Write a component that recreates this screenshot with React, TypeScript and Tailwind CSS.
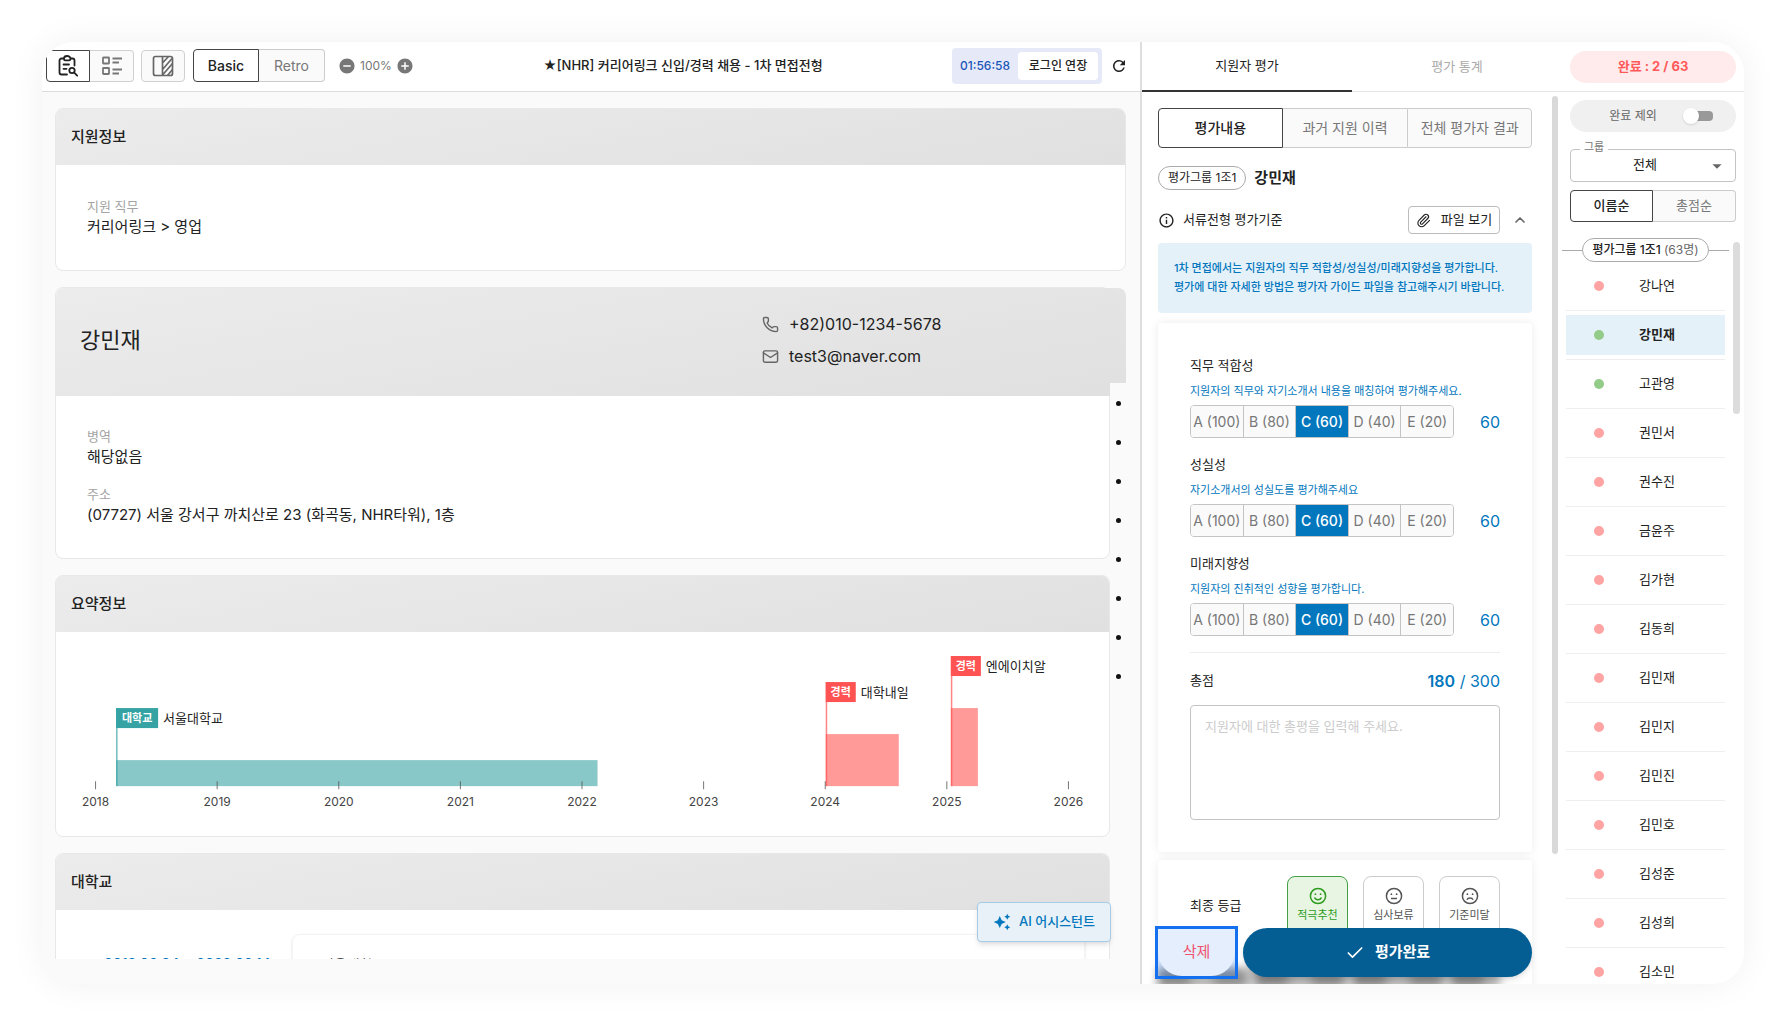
import { ReactNode } from 'react';
import { Mail, Paperclip, Phone, ChevronUp, Check } from 'lucide-react';
import { MdAddCircle, MdArrowDropDown, MdAutoAwesome, MdInfoOutline, MdRefresh, MdRemoveCircle } from 'react-icons/md';

const criteria = [
  { title: '직무 적합성', desc: '지원자의 직무와 자기소개서 내용을 매칭하여 평가해주세요.', score: 60 },
  { title: '성실성', desc: '자기소개서의 성실도를 평가해주세요', score: 60 },
  { title: '미래지향성', desc: '지원자의 진취적인 성향을 평가합니다.', score: 60 },
];

const levels = [
  { label: 'A (100)', value: 100 },
  { label: 'B (80)', value: 80 },
  { label: 'C (60)', value: 60 },
  { label: 'D (40)', value: 40 },
  { label: 'E (20)', value: 20 },
];

const applicants = [
  { name: '강나연', done: false },
  { name: '강민재', done: true },
  { name: '고관영', done: true },
  { name: '권민서', done: false },
  { name: '권수진', done: false },
  { name: '금윤주', done: false },
  { name: '김가현', done: false },
  { name: '김동희', done: false },
  { name: '김민재', done: false },
  { name: '김민지', done: false },
  { name: '김민진', done: false },
  { name: '김민호', done: false },
  { name: '김성준', done: false },
  { name: '김성희', done: false },
  { name: '김소민', done: false },
];

const years = [2018, 2019, 2020, 2021, 2022, 2023, 2024, 2025, 2026];

const careers = [
  { tag: '대학교', name: '서울대학교', x: 60, width: 481, height: 26, tagWidth: 42, color: '#35a3a3', fill: '#89c8c8' },
  { tag: '경력', name: '대학내일', x: 769, width: 73, height: 52, tagWidth: 30, color: '#ff5252', fill: '#ff9a98' },
  { tag: '경력', name: '엔에이치알', x: 894, width: 27, height: 78, tagWidth: 30, color: '#ff5252', fill: '#ff9a98' },
];

function ClipboardSearchIcon() {
  return (
    <svg width="22" height="22" viewBox="0 0 22 22" fill="none" stroke="currentColor" strokeWidth="1.8" strokeLinecap="round" strokeLinejoin="round">
      <path d="M6.500 3.500H4.500a2 2 0 0 0-2 2v12a2 2 0 0 0 2 2h5.500" />
      <path d="M14 3.500h1.500a2 2 0 0 1 2 2V10.500" />
      <path d="M7 3.500a3.200 2.500 0 0 1 6.400 0v0.500a1.300 1.300 0 0 1-1.300 1.300H8.300a1.300 1.300 0 0 1-1.300-1.300z" />
      <path d="M6.500 9.500h5.500M6.500 13.800h3" />
      <circle cx="15" cy="15.500" r="2.700" />
      <path d="M17.200 17.700l3 3" />
    </svg>
  );
}

function ListIcon() {
  return (
    <svg width="22" height="22" viewBox="0 0 22 22" fill="none" stroke="currentColor" strokeWidth="1.8">
      <rect x="2" y="2.500" width="6" height="6" rx="0.5" />
      <rect x="2" y="13" width="6" height="6" rx="0.5" />
      <path d="M11.500 3.500H21M11.500 7.500H18M11.500 14.500H21M11.500 18.500H18" />
    </svg>
  );
}

function SplitIcon() {
  return (
    <svg width="22" height="22" viewBox="0 0 22 22" fill="none" stroke="currentColor" strokeWidth="1.7">
      <rect x="1.500" y="1.500" width="19" height="19" rx="2" />
      <path d="M10.500 1.500v19M10.500 8l6-6.500M10.500 14.500l9.500-11M10.500 20l10-11.500M15.500 20.500l5-6" />
    </svg>
  );
}

function FaceIcon({ mouth }: { mouth: string }) {
  return (
    <svg width="18" height="18" viewBox="0 0 18 18" fill="none" stroke="currentColor" strokeWidth="1.5">
      <circle cx="9" cy="9" r="7.6" />
      <circle cx="6.4" cy="7.2" r="0.9" fill="currentColor" stroke="none" />
      <circle cx="11.6" cy="7.2" r="0.9" fill="currentColor" stroke="none" />
      <path d={mouth} />
    </svg>
  );
}

function CardHeader({ title }: { title: string }) {
  return (
    <div className="h-14 flex items-center px-[15px] bg-linear-170 from-[#ececec] to-[#e0e0e0]">
      <h2 className="text-[15px] font-medium">{title}</h2>
    </div>
  );
}

function Card({ children, className = '' }: { children: ReactNode; className?: string }) {
  return (
    <section className={`shrink-0 rounded-lg border border-[#e8e8e8] bg-white ${className}`}>{children}</section>
  );
}

function Field({ label, value }: { label: string; value: string }) {
  return (
    <div>
      <dt className="text-[13px] leading-5 text-[#a3a3a3]">{label}</dt>
      <dd className="text-[15px] leading-[22px]">{value}</dd>
    </div>
  );
}

function CareerChart() {
  const base = 154;
  return (
    <svg className="block w-full" viewBox="0 0 1052 204">
      {careers.map((c) => {
        const top = base - c.height - 52;
        return (
          <g key={c.name}>
            <rect x={c.x} y={base - c.height} width={c.width} height={c.height} fill={c.fill} />
            <rect x={c.x} y={top} width="1.5" height={base - top} fill={c.color} opacity="0.7" />
            <rect x={c.x} y={top} width={c.tagWidth} height="20" fill={c.color} />
            <text x={c.x + c.tagWidth / 2} y={top + 14} textAnchor="middle" fontSize="11" fontWeight="700" fill="#fff">{c.tag}</text>
            <text x={c.x + c.tagWidth + 5} y={top + 15} fontSize="13" fill="#222">{c.name}</text>
          </g>
        );
      })}
      {years.map((year, i) => {
        const x = 39.5 + i * 121.5;
        return (
          <g key={year}>
            <path d={`M${x} 149v8`} stroke="#555" opacity="0.8" />
            <text x={x} y="174" textAnchor="middle" fontSize="12" fill="#444">{year}</text>
          </g>
        );
      })}
    </svg>
  );
}

function Toolbar() {
  return (
    <header className="h-[50px] shrink-0 flex items-center bg-white border-b border-[#dcdcdc] pl-1 pr-3 pb-0.5">
      <div className="flex text-[#777]">
        <button aria-label="지원서 보기" className="w-11 h-8 flex items-center justify-center rounded-l border border-[#444] bg-white text-[#222]">
          <ClipboardSearchIcon />
        </button>
        <button aria-label="목록 보기" className="w-11 h-8 flex items-center justify-center rounded-r border border-l-0 border-[#d0d0d0] bg-[#fafafa]">
          <ListIcon />
        </button>
      </div>
      <button aria-label="분할 보기" className="ml-[7px] w-11 h-8 flex items-center justify-center rounded border border-[#d0d0d0] bg-[#fafafa] text-[#666]">
        <SplitIcon />
      </button>
      <div className="ml-2 flex text-sm">
        <button className="w-[66px] h-[33px] rounded-l border border-[#444] bg-white font-medium">Basic</button>
        <button className="w-[66px] h-[33px] rounded-r border border-l-0 border-[#ccc] bg-[#fafafa] text-[#777]">Retro</button>
      </div>
      <div className="ml-[13px] flex items-center gap-1 text-xs text-[#777]">
        <button aria-label="축소"><MdRemoveCircle size={18} /></button>
        <span>100%</span>
        <button aria-label="확대"><MdAddCircle size={18} /></button>
      </div>
      <h1 className="flex-1 text-center text-[13px] font-medium">★[NHR] 커리어링크 신입/경력 채용 - 1차 면접전형</h1>
      <div className="h-9 flex items-center rounded bg-[#e6eaf8] pl-2 pr-1 gap-2">
        <span className="text-xs font-medium text-[#1c55b8]">01:56:58</span>
        <button className="w-20 h-7 rounded bg-white text-xs font-medium">로그인 연장</button>
      </div>
      <button aria-label="새로고침" className="ml-2"><MdRefresh size={18} /></button>
    </header>
  );
}

function Resume() {
  return (
    <main className="relative flex-1 min-w-0 flex flex-col bg-[#fafafa]">
      <Toolbar />
      <div className="relative flex-1 min-h-0 overflow-hidden flex flex-col gap-4 pt-4 pl-[13px] pr-[14px] mb-[25px]">
        <Card className="overflow-hidden">
          <CardHeader title="지원정보" />
          <dl className="px-[31px] pt-[31px] pb-8">
            <Field label="지원 직무" value="커리어링크 > 영업" />
          </dl>
        </Card>

        <Card className="mr-4">
          <div className="-mr-[17px] h-[108px] flex items-center rounded-t-lg px-6 pb-1 bg-linear-170 from-[#ececec] to-[#e0e0e0]">
            <h2 className="w-[682px] text-[22px]">강민재</h2>
            <div className="flex flex-col gap-2">
              <p className="flex items-center gap-2.5"><Phone size={17} strokeWidth={2} className="text-[#666]" />+82)010-1234-5678</p>
              <p className="flex items-center gap-2.5"><Mail size={17} strokeWidth={2} className="text-[#666]" />test3@naver.com</p>
            </div>
          </div>
          <dl className="px-[31px] pt-[30px] pb-8 flex flex-col gap-4">
            <Field label="병역" value="해당없음" />
            <Field label="주소" value="(07727) 서울 강서구 까치산로 23 (화곡동, NHR타워), 1층" />
          </dl>
        </Card>

        <Card className="mr-4 overflow-hidden">
          <CardHeader title="요약정보" />
          <CareerChart />
        </Card>

        <Card className="mr-4 overflow-hidden">
          <CardHeader title="대학교" />
          <div className="flex items-start pt-6 pl-12">
            <p className="w-[188px] pt-5 text-sm font-medium text-[#0277bd]">2018.03.04 ~ 2022.02.14</p>
            <div className="flex-1 mr-6 h-32 rounded-lg border border-[#f3f3f3] shadow-sm px-7 pt-5 text-sm">서울대학교</div>
          </div>
        </Card>

        {/* section navigator, laid over the right gutter */}
        <nav className="absolute right-0 top-[291px] bottom-0 w-[30px] bg-[#fafafa] pt-[18px] pl-[6px] flex flex-col gap-[34px]">
          {Array.from({ length: 8 }, (_, i) => (
            <span key={i} className="w-[5px] h-[5px] rounded-full bg-[#111]" />
          ))}
        </nav>
      </div>
      <button className="absolute right-[29px] bottom-[42px] w-[134px] h-10 flex items-center justify-center gap-2 rounded border border-[#a5cbe6] bg-[#e8f1f8] text-[13px] font-medium text-[#0277bd] shadow-md">
        <MdAutoAwesome size={18} className="shrink-0" />
        AI 어시스턴트
      </button>
    </main>
  );
}

function Criterion({ title, desc, score }: { title: string; desc: string; score: number }) {
  return (
    <div>
      <h3 className="text-[13px] leading-5">{title}</h3>
      <p className="mt-2 text-[11px] leading-4 text-[#0277bd]">{desc}</p>
      <div className="mt-1.5 flex items-center justify-between">
        <div className="flex h-[33px] w-[264px] overflow-hidden rounded border border-[#c4c4c4] divide-x divide-[#c4c4c4] text-sm">
          {levels.map((level) => (
            <button
              key={level.label}
              className={
                level.value === score
                  ? '-my-px flex-1 bg-[#0277bd] font-medium text-white whitespace-nowrap'
                  : 'flex-1 bg-[#fafafa] text-[#777] whitespace-nowrap'
              }
            >
              {level.label}
            </button>
          ))}
        </div>
        <span className="text-base text-[#0277bd]">{score}</span>
      </div>
    </div>
  );
}

function Evaluation() {
  return (
    <section className="relative w-[422px] shrink-0 flex flex-col border-l-2 border-[#dedede] bg-white">
      <div className="h-[50px] shrink-0 grid grid-cols-2 border-b border-[#e5e5e5] text-[13px]">
        <button className="-mb-px border-b-2 border-[#333]">지원자 평가</button>
        <button className="text-[#aaa]">평가 통계</button>
      </div>

      <div className="flex-1 min-h-0 overflow-hidden pt-4 pl-4 pr-[30px]">
        <div className="grid grid-cols-3 h-10 text-sm">
          <button className="rounded-l border border-[#444] font-medium">평가내용</button>
          <button className="border-y border-[#ccc] bg-[#fafafa] text-[#777]">과거 지원 이력</button>
          <button className="rounded-r border border-[#ccc] bg-[#fafafa] text-[#777]">전체 평가자 결과</button>
        </div>

        <div className="mt-[18px] flex items-center gap-2">
          <span className="h-6 px-[9px] flex items-center rounded-full border border-[#aaa] text-xs">평가그룹 1조1</span>
          <strong className="text-[15px] leading-6">강민재</strong>
        </div>

        <div className="mt-4 h-7 flex items-center text-[13px]">
          <MdInfoOutline size={17} />
          <span className="ml-2">서류전형 평가기준</span>
          <button className="ml-auto h-7 w-[92px] flex items-center justify-center gap-2.5 rounded border border-[#bbb]">
            <Paperclip size={15} strokeWidth={1.8} />
            파일 보기
          </button>
          <button aria-label="접기" className="ml-3 mr-1 text-[#666]"><ChevronUp size={16} strokeWidth={2.5} /></button>
        </div>

        <p className="mt-[9px] rounded bg-[#e5f1f9] p-4 text-[11px] leading-[19px] font-medium text-[#0277bd]">
          1차 면접에서는 지원자의 직무 적합성/성실성/미래지향성을 평가합니다.
          <br />
          평가에 대한 자세한 방법은 평가자 가이드 파일을 참고해주시기 바랍니다.
        </p>

        <div className="mt-2.5 rounded p-8 bg-white shadow-[0_0_10px_rgba(0,0,0,0.08)]">
          <div className="flex flex-col gap-4">
            {criteria.map((c) => <Criterion key={c.title} {...c} />)}
          </div>
          <div className="mt-4 border-t border-[#eee] pt-4 flex items-center justify-between">
            <label htmlFor="comment" className="text-[13px]">총점</label>
            <span className="text-base leading-6 text-[#0277bd]"><b className="font-semibold">180</b> / 300</span>
          </div>
          <textarea
            id="comment"
            placeholder="지원자에 대한 총평을 입력해 주세요."
            className="mt-3 block w-full h-[115px] resize-none rounded border border-[#c4c4c4] px-3.5 py-2.5 text-[13px] leading-5 placeholder:text-[#ccc]"
          />
        </div>

        <div className="mt-2 h-40 rounded px-8 pt-4 flex justify-between bg-white shadow-[0_0_10px_rgba(0,0,0,0.08)]">
          <h3 className="pt-[19px] text-[13px] leading-5">최종 등급</h3>
          <div className="flex gap-[15px] text-[11px]">
            <button className="w-[61px] h-16 flex flex-col items-center gap-0.5 pt-2.5 rounded-lg border border-[#43a047] bg-[#e8f5e3] text-[#2e9b1f]">
              <FaceIcon mouth="M5.500 10.500c1.200 3 5.800 3 7 0" />
              적극추천
            </button>
            <button className="w-[61px] h-16 flex flex-col items-center gap-0.5 pt-2.5 rounded-lg border border-[#ccc] text-[#555]">
              <FaceIcon mouth="M6 11.500h6" />
              심사보류
            </button>
            <button className="w-[61px] h-16 flex flex-col items-center gap-0.5 pt-2.5 rounded-lg border border-[#ccc] text-[#555]">
              <FaceIcon mouth="M6 12.800c1-2.300 5-2.300 6 0" />
              기준미달
            </button>
          </div>
        </div>
      </div>

      <div className="absolute right-1 top-[54px] h-[758px] w-1.5 rounded-full bg-[#d9d9d9]" />

      {/* floating actions */}
      <div className="absolute inset-x-0 bottom-0 h-[58px] pl-[13px] pr-[30px] flex items-start gap-[5px] overflow-hidden">
        <div className="absolute left-4 right-[62px] -bottom-1 h-5 bg-[repeating-linear-gradient(90deg,#8a8a8a_0_28px,#b5b5b5_36px_52px,#8f8f8f_60px_84px,#c9c9c9_92px_98px)] blur-[4px]" />
        <button className="relative w-[83px] h-[53px] border-[3px] border-[#1570ef] bg-[#1570ef]/20 text-[15px] text-[#f0506e]">
          <span className="h-full flex items-center justify-center rounded-b-3xl bg-[#e5eefc]">삭제</span>
        </button>
        <button className="relative mt-0.5 flex-1 h-[49px] flex items-center justify-center gap-2.5 rounded-full bg-[#045e93] text-[15px] font-bold text-white shadow-md">
          <Check size={20} strokeWidth={2} />
          평가완료
        </button>
      </div>
    </section>
  );
}

function ApplicantList() {
  return (
    <aside className="w-[182px] shrink-0 flex flex-col bg-white text-[13px]">
      <div className="h-[50px] shrink-0 px-2 flex items-center border-b border-[#e5e5e5]">
        <p className="flex-1 h-8 flex items-center justify-center rounded-full bg-[#ffebeb] font-bold text-[#ff5a5a]">완료 : 2 / 63</p>
      </div>
      <div className="px-2 pt-2">
        <label className="h-8 flex items-center justify-center gap-7 rounded-full bg-[#f0f0f0] text-xs text-[#666]">
          <span className="pl-4">완료 제외</span>
          <input type="checkbox" className="sr-only" />
          <span className="relative w-7 h-2.5 rounded bg-[#999]">
            <span className="absolute -left-0.5 -top-[3px] w-4 h-4 rounded-full bg-white shadow" />
          </span>
        </label>
        <div className="relative mt-[17px]">
          <label htmlFor="group" className="absolute left-2.5 -top-2.5 bg-white px-1 text-[11px] leading-4 text-[#777]">그룹</label>
          <select id="group" className="block w-full h-[33px] appearance-none rounded border border-[#c4c4c4] bg-white pr-4 pb-0.5 text-center">
            <option>전체</option>
          </select>
          <MdArrowDropDown size={22} className="pointer-events-none absolute right-2 top-1.5 text-[#666]" />
        </div>
        <div className="mt-2 grid grid-cols-2 h-8">
          <button className="rounded-l border border-[#444] font-medium">이름순</button>
          <button className="rounded-r border border-l-0 border-[#ccc] bg-[#fafafa] text-[#777]">총점순</button>
        </div>
      </div>

      <div className="flex-1 min-h-0 mt-4 flex overflow-hidden">
        <div className="flex-1 min-w-0">
          <div className="flex items-center before:h-px before:flex-1 before:bg-[#aaa] after:h-px after:flex-1 after:bg-[#aaa]">
            <span className="h-6 px-[9px] flex items-center rounded-full border border-[#aaa] text-xs font-medium">
              평가그룹 1조1&nbsp;<span className="font-normal text-[#666]">(63명)</span>
            </span>
          </div>
          <ul className="pl-1 pr-1">
            {applicants.map((a) => {
              const selected = a.name === '강민재';
              return (
                <li key={a.name} className="h-[49px] flex flex-col justify-center border-b border-[#eee]">
                  <button className={selected ? 'h-10 flex items-center bg-[#e5f1f9] font-bold' : 'h-10 flex items-center'}>
                    <span className={a.done ? 'ml-7 w-2.5 h-2.5 rounded-full bg-[#93cb88]' : 'ml-7 w-2.5 h-2.5 rounded-full bg-[#ffa3a3]'} />
                    <span className="ml-[35px]">{a.name}</span>
                  </button>
                </li>
              );
            })}
          </ul>
        </div>
        <div className="mt-1 ml-1 mr-1 w-[7px] h-[172px] rounded-full bg-[#dcdcdc]" />
      </div>
    </aside>
  );
}

export default function App() {
  return (
    <div className="h-screen bg-white pt-[42px] pb-[43px] pl-[42px] pr-[45px] font-['Inter','Noto_Sans_CJK_KR',sans-serif] text-[#222]">
      <div className="h-full flex overflow-hidden rounded-[32px] shadow-[0_0_36px_rgba(0,0,0,0.06)]">
        <Resume />
        <Evaluation />
        <ApplicantList />
      </div>
    </div>
  );
}
